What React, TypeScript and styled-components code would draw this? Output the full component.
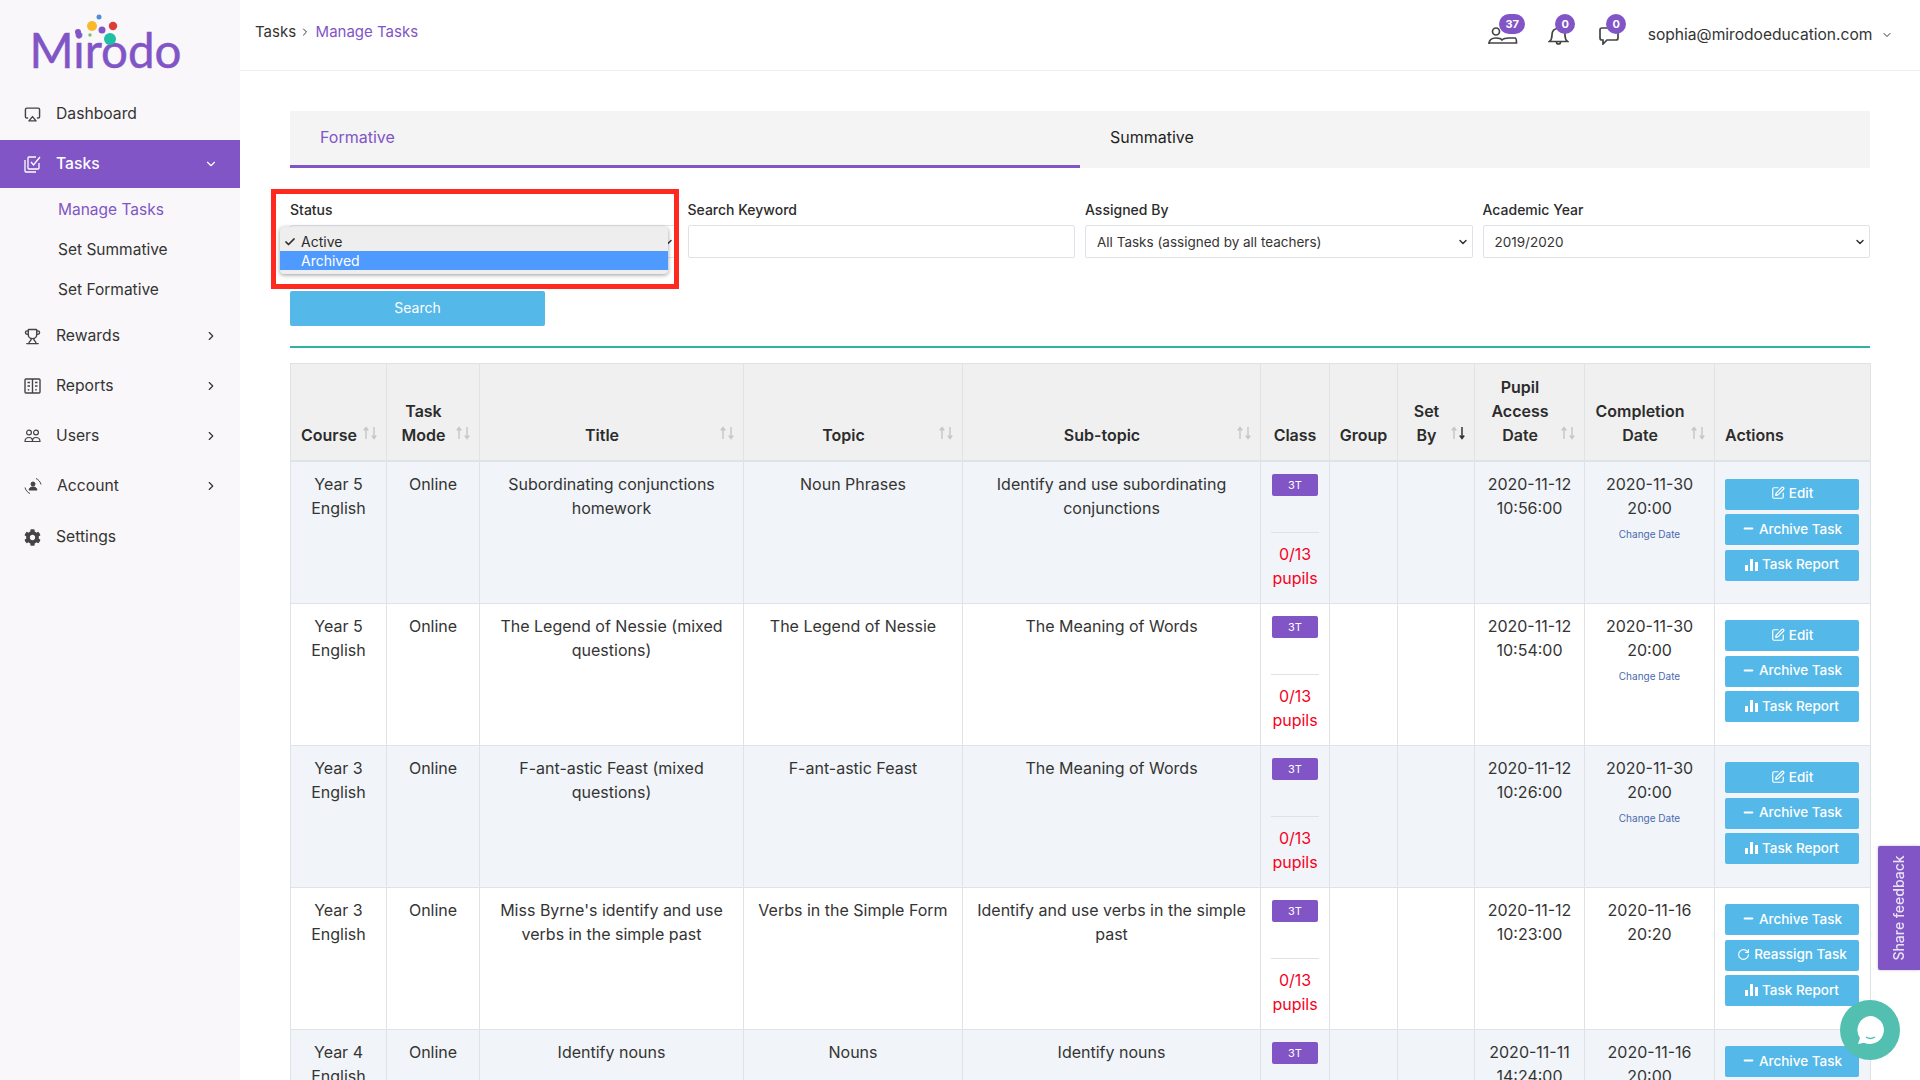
import React from 'react';
import styled, { createGlobalStyle } from 'styled-components';
import { Airplay, Trophy, ChevronRight, ChevronDown, SquarePen, RotateCw, Minus, Check } from 'lucide-react';
import { FaCog } from 'react-icons/fa';

const PURPLE = '#8155c6';
const BLUE = '#54b8e9';
const FONT = 'Inter, "Open Sans", sans-serif';

const GlobalStyle = createGlobalStyle`
  html, body { margin: 0; padding: 0; background: #fff; }
  * { box-sizing: border-box; }
  body { font-family: ${FONT}; color: #343434; font-size: 16px; line-height: 24px; }
`;

const Page = styled.div`
  display: flex;
  width: 1920px;
  height: 1080px;
  overflow: hidden;
`;

const Sidebar = styled.aside`
  flex: 0 0 240px;
  background: #f9f7f9;
`;

const LogoBox = styled.div`
  position: relative;
  height: 88px;
`;

const LogoText = styled.div`
  position: absolute;
  left: 29.5px;
  top: 20px;
  font-family: Lato, sans-serif;
  font-size: 47.5px;
  line-height: 60px;
  color: ${PURPLE};
  -webkit-text-stroke: 0.5px ${PURPLE};
`;

const LogoDots = styled.svg`
  position: absolute;
  left: 0;
  top: 0;
`;

const NavRow = styled.div<{ $active?: boolean; $h?: number }>`
  display: flex;
  align-items: center;
  height: ${p => p.$h ?? 50}px;
  padding-left: 24px;
  gap: 15px;
  font-size: 15.7px;
  font-weight: ${p => (p.$active ? 500 : 400)};
  color: ${p => (p.$active ? '#fff' : '#343434')};
  background: ${p => (p.$active ? PURPLE : 'transparent')};
`;

const NavLabel = styled.span`
  flex: 1;
`;

const NavChevron = styled.span`
  display: flex;
  width: 14px;
  margin-right: 22px;
`;

const SubMenu = styled.div`
  padding: 2px 0 1px 58px;
`;

const SubItem = styled.div<{ $current?: boolean }>`
  height: 40px;
  line-height: 40px;
  font-size: 15.5px;
  color: ${p => (p.$current ? PURPLE : '#343434')};
`;

const Main = styled.main`
  flex: 1;
  min-width: 0;
`;

const TopBar = styled.header`
  display: flex;
  align-items: center;
  height: 71px;
  padding: 0 27.5px 0 15px;
  border-bottom: 1px solid #eeeeee;
`;

const Crumbs = styled.div`
  flex: 1;
  display: flex;
  align-items: center;
  gap: 3px;
  margin-bottom: 7px;
  font-size: 15px;
`;

const CrumbLink = styled.span`
  margin-left: 1.5px;
  color: ${PURPLE};
`;

const TopIcons = styled.div`
  display: flex;
  gap: 30px;
  margin-top: 4px;
`;

const TopIcon = styled.div`
  position: relative;
  display: flex;
  height: 20px;
`;

const Count = styled.span<{ $left: number; $w: number }>`
  position: absolute;
  top: -13px;
  left: ${p => p.$left}px;
  width: ${p => p.$w}px;
  height: 20px;
  border-radius: 10px;
  background: ${PURPLE};
  color: #fff;
  font-size: 11px;
  font-weight: 700;
  line-height: 20px;
  text-align: center;
`;

const Email = styled.div`
  display: flex;
  align-items: center;
  gap: 8px;
  margin-left: 28.5px;
  font-size: 15.6px;
`;

const Content = styled.div`
  padding: 40px 50px 0;
`;

const Tabs = styled.div`
  display: flex;
  height: 57px;
  background: #f4f4f4;
`;

const Tab = styled.div<{ $active?: boolean }>`
  flex: 0 0 790px;
  padding: 14px 30px 0;
  font-size: 16px;
  color: ${p => (p.$active ? PURPLE : '#1f1f1f')};
  border-bottom: 3px solid ${p => (p.$active ? PURPLE : 'transparent')};
`;

const Filters = styled.div`
  position: relative;
  display: grid;
  grid-template-columns: repeat(4, 1fr);
  gap: 10px;
  margin-top: 30px;
`;

const Field = styled.div`
  position: relative;
`;

const Label = styled.div`
  height: 27px;
  font-size: 14px;
  font-weight: 500;
  line-height: 24px;
  color: #2c2c2c;
`;

const FakeSelect = styled.div`
  display: flex;
  align-items: center;
  justify-content: space-between;
  height: 33px;
  padding: 0 3px 0 11px;
  border: 1px solid #dfe3e8;
  border-radius: 2px;
  font-size: 13.5px;
  color: #343434;
`;

const Popup = styled.div`
  position: absolute;
  left: -10px;
  top: 29px;
  width: 388px;
  height: 47px;
  padding-bottom: 4px;
  background: #eeeeee;
  border-radius: 4px;
  box-shadow: 0 1px 4px rgba(0, 0, 0, 0.4);
  font-size: 14px;
  z-index: 2;
`;

const PopupItem = styled.div<{ $selected?: boolean }>`
  display: flex;
  align-items: center;
  height: ${p => (p.$selected ? 19 : 24)}px;
  padding: ${p => (p.$selected ? '0 0 0 4px' : '5px 0 0 4px')};
  color: ${p => (p.$selected ? '#fff' : '#2c2c2c')};
  background: ${p => (p.$selected ? '#4f9aff' : 'transparent')};
`;

const CheckSlot = styled.span`
  display: flex;
  width: 17px;
`;

const RedBox = styled.div`
  position: absolute;
  left: -19px;
  top: -9px;
  width: 408px;
  height: 100px;
  border: 5px solid #ff2a1f;
  pointer-events: none;
  z-index: 3;
`;

const SearchButton = styled.button`
  display: block;
  width: 255px;
  height: 35px;
  margin-top: 33px;
  padding: 0 0 2px;
  border: none;
  border-radius: 2px;
  background: ${BLUE};
  color: #fff;
  font-family: ${FONT};
  font-size: 14px;
`;

const Divider = styled.div`
  height: 2px;
  margin: 20px 0 15px;
  background: #2fb3a0;
`;

const Table = styled.table`
  width: 1580px;
  border-collapse: collapse;
  table-layout: fixed;
`;

const Col = styled.col<{ $w: number }>`
  width: ${p => p.$w}px;
`;

const Th = styled.th<{ $sort?: boolean; $left?: boolean }>`
  position: relative;
  padding: 11px ${p => (p.$sort ? 29 : 8)}px 13px ${p => (p.$left ? 10 : p.$sort ? 10 : 8)}px;
  border: 1px solid #e0e3e6;
  border-bottom-width: 2px;
  background: #f0f0f0;
  font-size: 16px;
  font-weight: 600;
  color: #2c2c2c;
  vertical-align: bottom;
  text-align: ${p => (p.$left ? 'left' : 'center')};
`;

const Tr = styled.tr`
  height: 142px;
  &:nth-child(odd) td {
    background: #f1f4f8;
  }
`;

const Td = styled.td`
  padding: 10px 10px 7px;
  border: 1px solid #e0e3e6;
  font-size: 16px;
  text-align: center;
  vertical-align: top;
  color: #343434;
`;

const SortIcon = styled.svg`
  position: absolute;
  right: 8px;
  bottom: 20px;
`;

const ClassBadge = styled.div`
  width: 46px;
  height: 22px;
  margin: 2px auto 0;
  border-radius: 2px;
  background: ${PURPLE};
  color: #fff;
  font-size: 11px;
  line-height: 22px;
`;

const Rule = styled.div`
  height: 1px;
  margin: 36px 0 9px;
  background: #dfe1e4;
`;

const Pupils = styled.div`
  color: #f6021d;
`;

const ChangeDate = styled.div`
  margin-top: 6px;
  font-size: 10px;
  line-height: 16px;
  color: #4a6ab0;
`;

const Actions = styled.div`
  display: flex;
  flex-direction: column;
  gap: 4.5px;
  width: 134px;
  margin-top: 6.5px;
`;

const ActionButton = styled.button`
  display: flex;
  align-items: center;
  justify-content: center;
  gap: 4px;
  height: 31px;
  padding: 0 0 2px;
  border: none;
  border-radius: 2px;
  background: ${BLUE};
  color: #fff;
  font-family: ${FONT};
  font-size: 13.5px;
  font-weight: 500;
`;

const Feedback = styled.div`
  position: fixed;
  right: 0;
  top: 846px;
  display: flex;
  align-items: center;
  justify-content: center;
  width: 42px;
  height: 124px;
  border-radius: 2px 0 0 2px;
  background: ${PURPLE};
  box-shadow: 0 0 3px rgba(0, 0, 0, 0.25);
`;

const FeedbackText = styled.span`
  transform: rotate(-90deg);
  white-space: nowrap;
  color: #e9e2f5;
  font-size: 14px;
  font-weight: 500;
`;

const ChatBubble = styled.div`
  position: fixed;
  left: 1840px;
  top: 1000px;
  display: flex;
  align-items: center;
  justify-content: center;
  width: 60px;
  height: 60px;
  border-radius: 50%;
  background: #52bfb0;
`;

const BarsIcon = () => (
  <svg width="13" height="13" viewBox="0 0 13 13" fill="currentColor">
    <rect x="0" y="7" width="3" height="6" />
    <rect x="5" y="1" width="3" height="12" />
    <rect x="10" y="4" width="3" height="9" />
  </svg>
);

const TasksIcon = () => (
  <svg width="17" height="17" viewBox="0 0 17 17" fill="none" stroke="#fff" strokeWidth="1.3">
    <path d="M1 4v11a1 1 0 0 0 1 1h10" />
    <path d="M15 7v5a1 1 0 0 1-1 1H5a1 1 0 0 1-1-1V2a1 1 0 0 1 1-1h7" />
    <path d="M7 6l2.500 3L16 1" />
  </svg>
);

const ReportsIcon = () => (
  <svg width="17" height="16" viewBox="0 0 17 16" fill="none" stroke="#444" strokeWidth="1.4">
    <rect x="1" y="1" width="15" height="14" rx="1" />
    <path d="M8.5 1v14M3.5 4.5h2.5M3.5 8h2.5M11 4.5h2.5M11 8h2.5M4.5 11v1.5M12 11v1.5" />
  </svg>
);

const UsersIcon = () => (
  <svg width="17" height="14" viewBox="0 0 17 14" fill="none" stroke="#444" strokeWidth="1.2">
    <circle cx="5" cy="3.5" r="2.4" />
    <circle cx="12" cy="3.5" r="2.4" />
    <path d="M1 12.5c0-3 1.5-4 4-4s3.5 1 3.5 3.5c0-2.5 1-3.5 3.5-3.5s4 1 4 4z" />
  </svg>
);

const AccountIcon = () => (
  <svg width="18" height="18" viewBox="0 0 18 18" fill="none" stroke="#444" strokeWidth="1">
    <circle cx="9" cy="7" r="2" fill="#444" />
    <path d="M5 13c.5-2.5 2-3 4-3s3.5.5 4 3z" fill="#444" />
    <path d="M12 1.5c2.500 1 4.500 3.500 5 6M6 16.500c-2.500-1-4.500-3.500-5-6" />
  </svg>
);

const PupilBookIcon = () => (
  <svg width="30" height="18" viewBox="0 0 30 18" fill="none" stroke="#444" strokeWidth="1.7">
    <circle cx="8" cy="4.500" r="3.500" />
    <path d="M1 17c0-4.500 3-6 7-6 3 0 5 .5 6 2 1.500-1.500 4-2 7-2h6c1 0 1.500 2 1.500 5H1z" />
  </svg>
);

const BellIcon = () => (
  <svg width="21" height="18" viewBox="0 0 21 18" fill="none" stroke="#444" strokeWidth="1.7">
    <path d="M1.500 14.500c2-1.500 2.500-3.500 2.500-6.500 0-4 2.500-6.500 6.500-6.500S17 4 17 8c0 3 .5 5 2.500 6.500z" />
    <path d="M8.500 15a2 2 0 0 0 4 0" />
  </svg>
);

const ChatIcon = () => (
  <svg width="20" height="18" viewBox="0 0 20 18" fill="none" stroke="#444" strokeWidth="1.7">
    <path d="M3 1h14c1 0 2 1 2 2v8c0 1-1 2-2 2H8l-4 4v-4H3c-1 0-2-1-2-2V3c0-1 1-2 2-2z" />
  </svg>
);

const Sort = ({ down }: { down?: boolean }) => (
  <SortIcon width="16" height="14" viewBox="0 0 16 14" fill="none" strokeWidth="1.5">
    <path d="M4 13V2M1.800 4.500 4 1.500l2.200 3" stroke="#c8c8c8" />
    <path d="M12 1v11M9.800 9.500l2.200 3 2.200-3" stroke={down ? '#333' : '#c8c8c8'} />
  </SortIcon>
);

interface Task {
  course: string;
  title: string;
  topic: string;
  sub: string;
  access: string;
  due: string;
  edit: boolean;
}

const tasks: Task[] = [
  { course: 'Year 5 English', title: 'Subordinating conjunctions homework', topic: 'Noun Phrases', sub: 'Identify and use subordinating conjunctions', access: '2020-11-12 10:56:00', due: '2020-11-30 20:00', edit: true },
  { course: 'Year 5 English', title: 'The Legend of Nessie (mixed questions)', topic: 'The Legend of Nessie', sub: 'The Meaning of Words', access: '2020-11-12 10:54:00', due: '2020-11-30 20:00', edit: true },
  { course: 'Year 3 English', title: 'F-ant-astic Feast (mixed questions)', topic: 'F-ant-astic Feast', sub: 'The Meaning of Words', access: '2020-11-12 10:26:00', due: '2020-11-30 20:00', edit: true },
  { course: 'Year 3 English', title: "Miss Byrne's identify and use verbs in the simple past", topic: 'Verbs in the Simple Form', sub: 'Identify and use verbs in the simple past', access: '2020-11-12 10:23:00', due: '2020-11-16 20:20', edit: false },
  { course: 'Year 4 English', title: 'Identify nouns', topic: 'Nouns', sub: 'Identify nouns', access: '2020-11-11 14:24:00', due: '2020-11-16 20:00', edit: false },
];

const columnWidths = [96, 93, 264, 219, 298, 69, 68, 77, 110, 130, 156];

export default function App() {
  return (
    <Page>
      <GlobalStyle />
      <Sidebar>
        <LogoBox>
          <LogoText>Mirodo</LogoText>
          <LogoDots width="240" height="88">
            <circle cx="99" cy="17" r="2.500" fill="#4b8fd8" />
            <circle cx="92" cy="26" r="5" fill="#f8b92b" />
            <circle cx="113" cy="26" r="4.200" fill="#de3b3b" />
            <circle cx="102" cy="30" r="3.500" fill={PURPLE} />
            <circle cx="78" cy="32" r="3" fill={PURPLE} />
            <circle cx="90" cy="35" r="1.700" fill="#7cc36a" />
            <circle cx="110" cy="39" r="6" fill="#1fbfa3" />
          </LogoDots>
        </LogoBox>
        <NavRow $h={52}>
          <Airplay size={17} color="#444" />
          <NavLabel>Dashboard</NavLabel>
        </NavRow>
        <NavRow $active $h={48}>
          <TasksIcon />
          <NavLabel>Tasks</NavLabel>
          <NavChevron><ChevronDown size={14} /></NavChevron>
        </NavRow>
        <SubMenu>
          <SubItem $current>Manage Tasks</SubItem>
          <SubItem>Set Summative</SubItem>
          <SubItem>Set Formative</SubItem>
        </SubMenu>
        <NavRow>
          <Trophy size={17} color="#444" />
          <NavLabel>Rewards</NavLabel>
          <NavChevron><ChevronRight size={14} /></NavChevron>
        </NavRow>
        <NavRow>
          <ReportsIcon />
          <NavLabel>Reports</NavLabel>
          <NavChevron><ChevronRight size={14} /></NavChevron>
        </NavRow>
        <NavRow>
          <UsersIcon />
          <NavLabel>Users</NavLabel>
          <NavChevron><ChevronRight size={14} /></NavChevron>
        </NavRow>
        <NavRow>
          <AccountIcon />
          <NavLabel>Account</NavLabel>
          <NavChevron><ChevronRight size={14} /></NavChevron>
        </NavRow>
        <NavRow $h={52}>
          <FaCog size={17} color="#444" />
          <NavLabel>Settings</NavLabel>
        </NavRow>
      </Sidebar>

      <Main>
        <TopBar>
          <Crumbs>
            Tasks <ChevronRight size={12} />
            <CrumbLink>Manage Tasks</CrumbLink>
          </Crumbs>
          <TopIcons>
            <TopIcon>
              <PupilBookIcon />
              <Count $left={11} $w={26}>37</Count>
            </TopIcon>
            <TopIcon>
              <BellIcon />
              <Count $left={7} $w={20}>0</Count>
            </TopIcon>
            <TopIcon>
              <ChatIcon />
              <Count $left={7} $w={20}>0</Count>
            </TopIcon>
          </TopIcons>
          <Email>
            sophia@mirodoeducation.com
            <ChevronDown size={12} />
          </Email>
        </TopBar>

        <Content>
          <Tabs>
            <Tab $active>Formative</Tab>
            <Tab>Summative</Tab>
          </Tabs>

          <Filters>
            <RedBox />
            <Field>
              <Label>Status</Label>
              <FakeSelect>
                <span />
                <ChevronDown size={12} strokeWidth={3} />
              </FakeSelect>
              <Popup>
                <PopupItem>
                  <CheckSlot><Check size={12} strokeWidth={3.5} /></CheckSlot>
                  Active
                </PopupItem>
                <PopupItem $selected>
                  <CheckSlot />
                  Archived
                </PopupItem>
              </Popup>
            </Field>
            <Field>
              <Label>Search Keyword</Label>
              <FakeSelect />
            </Field>
            <Field>
              <Label>Assigned By</Label>
              <FakeSelect>
                All Tasks (assigned by all teachers)
                <ChevronDown size={12} strokeWidth={3} />
              </FakeSelect>
            </Field>
            <Field>
              <Label>Academic Year</Label>
              <FakeSelect>
                2019/2020
                <ChevronDown size={12} strokeWidth={3} />
              </FakeSelect>
            </Field>
          </Filters>

          <SearchButton>Search</SearchButton>
          <Divider />

          <Table>
            <colgroup>
              {columnWidths.map((w, i) => <Col key={i} $w={w} />)}
            </colgroup>
            <thead>
              <tr>
                <Th $sort>Course<Sort /></Th>
                <Th $sort>Task Mode<Sort /></Th>
                <Th $sort>Title<Sort /></Th>
                <Th $sort>Topic<Sort /></Th>
                <Th $sort>Sub-topic<Sort /></Th>
                <Th>Class</Th>
                <Th>Group</Th>
                <Th $sort>Set By<Sort down /></Th>
                <Th $sort>Pupil Access Date<Sort /></Th>
                <Th $sort>Completion Date<Sort /></Th>
                <Th $left>Actions</Th>
              </tr>
            </thead>
            <tbody>
              {tasks.map(task => (
                <Tr key={task.access}>
                  <Td>{task.course}</Td>
                  <Td>Online</Td>
                  <Td>{task.title}</Td>
                  <Td>{task.topic}</Td>
                  <Td>{task.sub}</Td>
                  <Td>
                    <ClassBadge>3T</ClassBadge>
                    <Rule />
                    <Pupils>0/13 pupils</Pupils>
                  </Td>
                  <Td />
                  <Td />
                  <Td>{task.access}</Td>
                  <Td>
                    {task.due}
                    {task.edit && <ChangeDate>Change Date</ChangeDate>}
                  </Td>
                  <Td>
                    <Actions>
                      {task.edit && <ActionButton><SquarePen size={14} />Edit</ActionButton>}
                      <ActionButton><Minus size={13} strokeWidth={4} />Archive Task</ActionButton>
                      {!task.edit && <ActionButton><RotateCw size={13} />Reassign Task</ActionButton>}
                      <ActionButton><BarsIcon />Task Report</ActionButton>
                    </Actions>
                  </Td>
                </Tr>
              ))}
            </tbody>
          </Table>
        </Content>
      </Main>

      <Feedback><FeedbackText>Share feedback</FeedbackText></Feedback>
      <ChatBubble>
        <svg width="30" height="30" viewBox="0 0 30 30">
          <path d="M15 1a14 14 0 1 1-6 26.700L3 29l2-6A14 14 0 0 1 15 1z" fill="#fff" />
          <path d="M11 22c3 2 6 2 9 0" stroke="#52bfb0" strokeWidth="1.500" fill="none" />
        </svg>
      </ChatBubble>
    </Page>
  );
}
